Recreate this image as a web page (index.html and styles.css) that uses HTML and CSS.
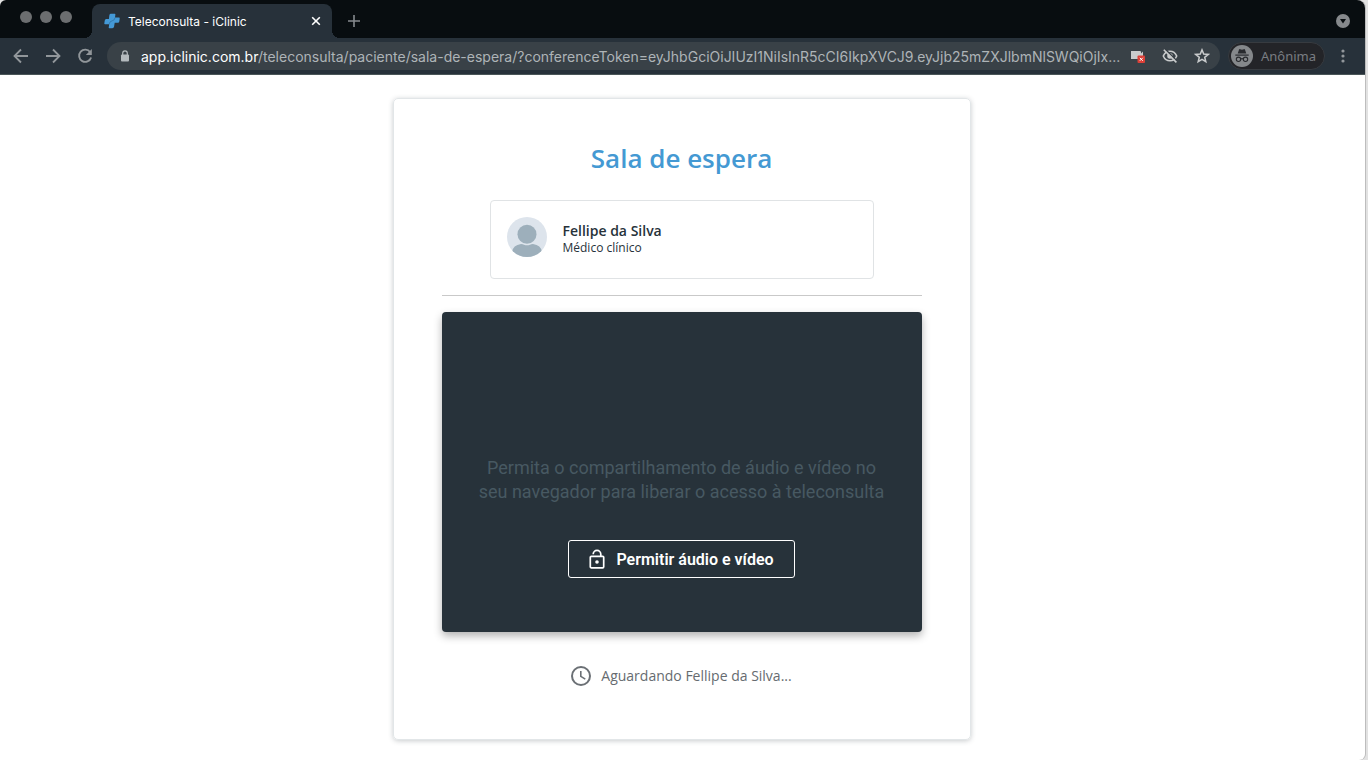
FILE: index.html
```
<!DOCTYPE html>
<html lang="pt-BR">
	<head>
		<meta charset="UTF-8" />
		<meta name="viewport" content="width=device-width, initial-scale=1.0" />
		<title>Teleconsulta - iClinic</title>
		<link rel="stylesheet" href="styles.css">
	</head>
	<body>

		<div class="browser">
			<header>
				<div class="tabs">
					<div class="lights"><span></span><span></span><span></span></div>
					<div class="tab">
						<svg class="favicon" width="16" height="16" viewBox="0 0 16 16">
							<path fill="#4499d6" d="M6.500 .8h4.200q.8 0 .7.8L11 4.600h4.100q.7 0 .6.8l-.4 3q-.2 1.300-1.400 1.300h-3.200l-.6 3.800q-.2 1.700-1.800 1.700H5.400q-.8 0-.7-.8l.5-3.200H1q-.8 0-.7-.8l.4-2.700Q.9 6 2.200 6h2.700l.4-3.600Q5.500.8 6.500.8z" />
							<path stroke="#2f6f9f" stroke-width=".7" fill="none" d="M5.200 11.200q.3-3 3-3.400Q10.800 7.400 11 4.600" />
						</svg>
						<span class="tabTitle">Teleconsulta - iClinic</span>
						<button class="iconBtn" aria-label="Fechar guia">
							<svg width="10" height="10" viewBox="0 0 10 10" stroke="#fff" stroke-width="1.600"><path d="M1.200 1.200l7.600 7.600M8.800 1.200L1.200 8.800" /></svg>
						</button>
					</div>
					<button class="iconBtn newTab" aria-label="Nova guia">
						<svg width="12" height="12" viewBox="0 0 12 12" stroke="#868a8e" stroke-width="1.600"><path d="M6 0v12M0 6h12" /></svg>
					</button>
					<button class="iconBtn tabSearch" aria-label="Pesquisar guias">
						<svg width="14" height="14" viewBox="0 0 14 14"><circle cx="7" cy="7" r="7" fill="#86898c" /><path d="M4 5h6L7 9.500z" fill="#080d10" /></svg>
					</button>
				</div>

				<div class="toolbar">
					<nav>
						<button class="iconBtn" aria-label="Voltar">
							<svg width="16" height="16" viewBox="0 0 16 16" stroke="#91969a" stroke-width="1.800" fill="none"><path d="M15 8H2M8 1.500L1.500 8 8 14.500" /></svg>
						</button>
						<button class="iconBtn" aria-label="Avançar">
							<svg width="16" height="16" viewBox="0 0 16 16" stroke="#91969a" stroke-width="1.800" fill="none"><path d="M1 8h13M8 1.500L14.500 8 8 14.500" /></svg>
						</button>
						<button class="iconBtn" aria-label="Recarregar">
							<svg width="16" height="16" viewBox="0 0 16 16"><path d="M13.200 4.200A6.100 6.100 0 1 0 14.100 9.500" stroke="#91969a" stroke-width="1.900" fill="none" /><path d="M14.800 1v6H8.800z" fill="#91969a" /></svg>
						</button>
					</nav>

					<div class="address">
						<svg width="10" height="12" viewBox="0 0 10 12"><path d="M2.700 5V3.200a2.300 2.300 0 0 1 4.600 0V5" stroke="#b4babd" stroke-width="1.200" fill="none" /><rect x="1" y="4.500" width="8" height="7" rx="1" fill="#b4babd" /></svg>
						<div class="url" role="textbox" aria-label="Endereço" contenteditable="true" spellcheck="false"><span class="host">app.iclinic.com.br</span>/teleconsulta/paciente/sala-de-espera/?conferenceToken=eyJhbGciOiJIUzI1NiIsInR5cCI6IkpXVCJ9.eyJjb25mZXJlbmNlSWQiOjIx...</div>
						<button class="iconBtn" aria-label="Câmera bloqueada">
							<svg width="16" height="16" viewBox="0 0 16 16"><path d="M1 3h9q1 0 1 1v1.500l2-2V11H1z" fill="#c9cbcc" /><rect x="7.500" y="7.500" width="7.500" height="7.500" rx="1" fill="#dc4038" /><path d="M9.800 9.800l3 3M12.800 9.800l-3 3" stroke="#fff" /></svg>
						</button>
						<button class="iconBtn" aria-label="Cookies bloqueados">
							<svg width="16" height="16" viewBox="0 0 16 16" fill="none" stroke="#c9cbcc" stroke-width="1.600"><path d="M1.300 8Q3.300 3.200 8 3.200T14.700 8Q12.700 12.800 8 12.800T1.300 8z" /><circle cx="8" cy="8" r="2" fill="#c9cbcc" /><path stroke="#394147" stroke-width="1.600" d="M3 1l12 12" /><path d="M1.800 1.800l12.600 12.600" /></svg>
						</button>
						<button class="iconBtn" aria-label="Favoritar">
							<svg width="16" height="16" viewBox="0 0 16 16" fill="none" stroke="#c9cbcc" stroke-width="1.500"><path d="M8 1.900l1.700 4.200 4.500.3-3.500 2.900 1.100 4.400L8 11.300l-3.800 2.400 1.100-4.400-3.500-2.900 4.500-.3z" /></svg>
						</button>
					</div>

					<button class="incognito">
						<svg width="22" height="22" viewBox="0 0 22 22"><circle cx="11" cy="11" r="11" fill="#85888b" /><g fill="#282a2e"><path d="M6.700 8.500L8 4.700q.3-.8 1.100-.5l1.900.5 1.900-.5q.8-.3 1.100.5l1.300 3.800z" /><path d="M4.300 9.500h13.400v1.200H4.300z" /></g><g fill="none" stroke="#282a2e" stroke-width="1.100"><circle cx="7.500" cy="14.300" r="2.200" /><circle cx="14.500" cy="14.300" r="2.200" /><path d="M9.700 14q1.300-.7 2.600 0" /></g></svg>
						Anônima
					</button>
					<button class="iconBtn" aria-label="Menu">
						<svg width="4" height="14" viewBox="0 0 4 14" fill="#91969a"><circle cx="2" cy="2" r="1.600" /><circle cx="2" cy="7" r="1.600" /><circle cx="2" cy="12" r="1.600" /></svg>
					</button>
				</div>
			</header>

			<main>
				<section class="room">
					<h1>Sala de espera</h1>

					<div class="doctor">
						<svg width="40" height="40" viewBox="0 0 40 40">
							<defs><clipPath id="round"><circle cx="20" cy="20" r="20" /></clipPath></defs>
							<g clip-path="url(#round)">
								<rect width="40" height="40" fill="#dde4ec" />
								<circle cx="20" cy="17.300" r="9.500" fill="#9dafbb" />
								<path d="M5 40v-5q1-7 9-8 2 0 3 .7 3 1 6 0 1-.7 3-.7 8 1 9 8v5z" fill="#9dafbb" />
							</g>
						</svg>
						<div>
							<h2>Fellipe da Silva</h2>
							<p>Médico clínico</p>
						</div>
					</div>

					<hr>

					<div class="video">
						<p>Permita o compartilhamento de áudio e vídeo no seu navegador para liberar o acesso à teleconsulta</p>
						<button class="allow">
							<svg width="16" height="20" viewBox="0 0 16 20" fill="none" stroke="#fff" stroke-width="1.700"><rect x="1.300" y="7.300" width="13.400" height="11.500" rx="1" /><path d="M4.200 5.200a3.800 3.800 0 0 1 7.600 0v2.200" /><circle cx="8" cy="13" r="1.800" fill="#fff" stroke="none" /></svg>
							Permitir áudio e vídeo
						</button>
					</div>

					<p class="status">
						<svg width="20" height="20" viewBox="0 0 20 20" fill="none" stroke="#6b7075"><circle cx="10" cy="10" r="9" stroke-width="2" /><path d="M9.800 5v5.400l4.500 2.700" stroke-width="1.600" /></svg>
						Aguardando Fellipe da Silva...
					</p>
				</section>
			</main>
		</div>

	</body>
</html>
```

FILE: styles.css
```
* {
	box-sizing: border-box;
	margin: 0;
	padding: 0;
}

body {
	background: #e2e2e2;
	min-height: 100vh;
	display: flex;
	padding-right: 3px;
	font-family: 'Open Sans', sans-serif;
	color: #27323a;
}

.browser {
	flex: 1;
	min-width: 0;
	background: #fff;
	border-radius: 6px 8px 6px 0;
	overflow: hidden;
	box-shadow: 1px 0 #bdbdbd;
}

button {
	font-family: inherit;
	cursor: pointer;
}

svg {
	display: block;
	flex-shrink: 0;
}

.iconBtn {
	display: flex;
	background: none;
	border: none;
}

.tabs {
	background: #080d10;
	height: 38px;
	display: flex;
	align-items: flex-end;
	padding: 0 15px 0 20px;
}

.lights {
	display: flex;
	gap: 8px;
	width: 72px;
	padding-bottom: 15px;
}

.lights span {
	width: 12px;
	height: 12px;
	border-radius: 50%;
	background: #6c6e70;
}

.tab {
	position: relative;
	display: flex;
	align-items: center;
	gap: 8px;
	width: 240px;
	height: 34px;
	padding: 0 11px 0 12px;
	background: #27313a;
	border-radius: 8px 8px 0 0;
}

/* curved feet of the tab */
.tab::before,
.tab::after {
	content: "";
	position: absolute;
	bottom: 0;
	width: 8px;
	height: 8px;
}

.tab::before {
	left: -8px;
	background: radial-gradient(circle at 0 0, transparent 8px, #27313a 8px);
}

.tab::after {
	right: -8px;
	background: radial-gradient(circle at 100% 0, transparent 8px, #27313a 8px);
}

.tabTitle {
	flex: 1;
	font-family: Inter, sans-serif;
	font-size: 12px;
	color: #fff;
}

.newTab {
	padding: 0 16px 11px;
}

.tabSearch {
	margin-left: auto;
	padding-bottom: 10px;
}

.toolbar {
	display: flex;
	align-items: center;
	gap: 8px;
	height: 37px;
	padding: 0 20px 0 13px;
	background: #27313a;
	border-bottom: 1px solid #4a5658;
}

nav {
	display: flex;
	gap: 16px;
	margin-right: 6px;
}

.address {
	flex: 1;
	min-width: 0;
	display: flex;
	align-items: center;
	gap: 16px;
	height: 28px;
	padding: 0 10px 0 13px;
	background: #394147;
	border-radius: 14px;
}

.url {
	flex: 1;
	min-width: 0;
	margin: 0 -12px 0 -5px;
	overflow: hidden;
	white-space: nowrap;
	font-family: Inter, sans-serif;
	font-size: 14px;
	color: #aeb4b7;
}

.url .host {
	color: #fff;
}

.incognito {
	display: flex;
	align-items: center;
	gap: 8px;
	height: 28px;
	padding: 0 8px 0 2px;
	background: #232428;
	border: 1px solid #373b40;
	border-radius: 14px;
	font-family: 'Noto Sans', sans-serif;
	font-size: 13px;
	color: #797d82;
}

.incognito + .iconBtn {
	margin-left: 8px;
}

main {
	display: flex;
	justify-content: center;
	padding: 23px 22px 20px 20px;
}

.room {
	width: 578px;
	padding: 39px 48px 53px;
	border: 1px solid #e2e6e8;
	border-radius: 5px;
	box-shadow: 0 1px 5px rgba(39, 50, 58, 0.25);
}

h1 {
	margin-bottom: 22px;
	font-size: 26px;
	font-weight: 600;
	line-height: 40px;
	text-align: center;
	color: #4499d3;
}

.doctor {
	display: flex;
	gap: 16px;
	width: 80%;
	margin: 0 auto 16px;
	padding: 16px 16px 21px;
	border: 1px solid #e0e3e5;
	border-radius: 4px;
}

.doctor h2 {
	margin-top: 4px;
	font-size: 14px;
	font-weight: 600;
	line-height: 20px;
}

.doctor p {
	font-size: 12px;
	line-height: 14px;
}

hr {
	border: none;
	border-top: 1px solid #c9c9c9;
	margin-bottom: 16px;
}

.video {
	display: flex;
	flex-direction: column;
	align-items: center;
	justify-content: flex-end;
	gap: 36px;
	min-height: 320px;
	padding: 32px 32px 54px;
	background: #27323a;
	border-radius: 4px;
	box-shadow: 0 4px 8px rgba(0, 0, 0, 0.3);
	font-family: Roboto, sans-serif;
}

.video p {
	font-size: 18px;
	line-height: 24px;
	text-align: center;
	color: #475962;
}

.allow {
	display: flex;
	align-items: center;
	gap: 11px;
	height: 38px;
	padding: 0 20px;
	background: none;
	border: 1px solid #fff;
	border-radius: 3px;
	font-size: 16px;
	font-weight: 600;
	color: #fff;
}

.status {
	display: flex;
	align-items: center;
	justify-content: center;
	gap: 10px;
	margin-top: 34px;
	font-size: 14px;
	line-height: 20px;
	color: #666b70;
}
```
